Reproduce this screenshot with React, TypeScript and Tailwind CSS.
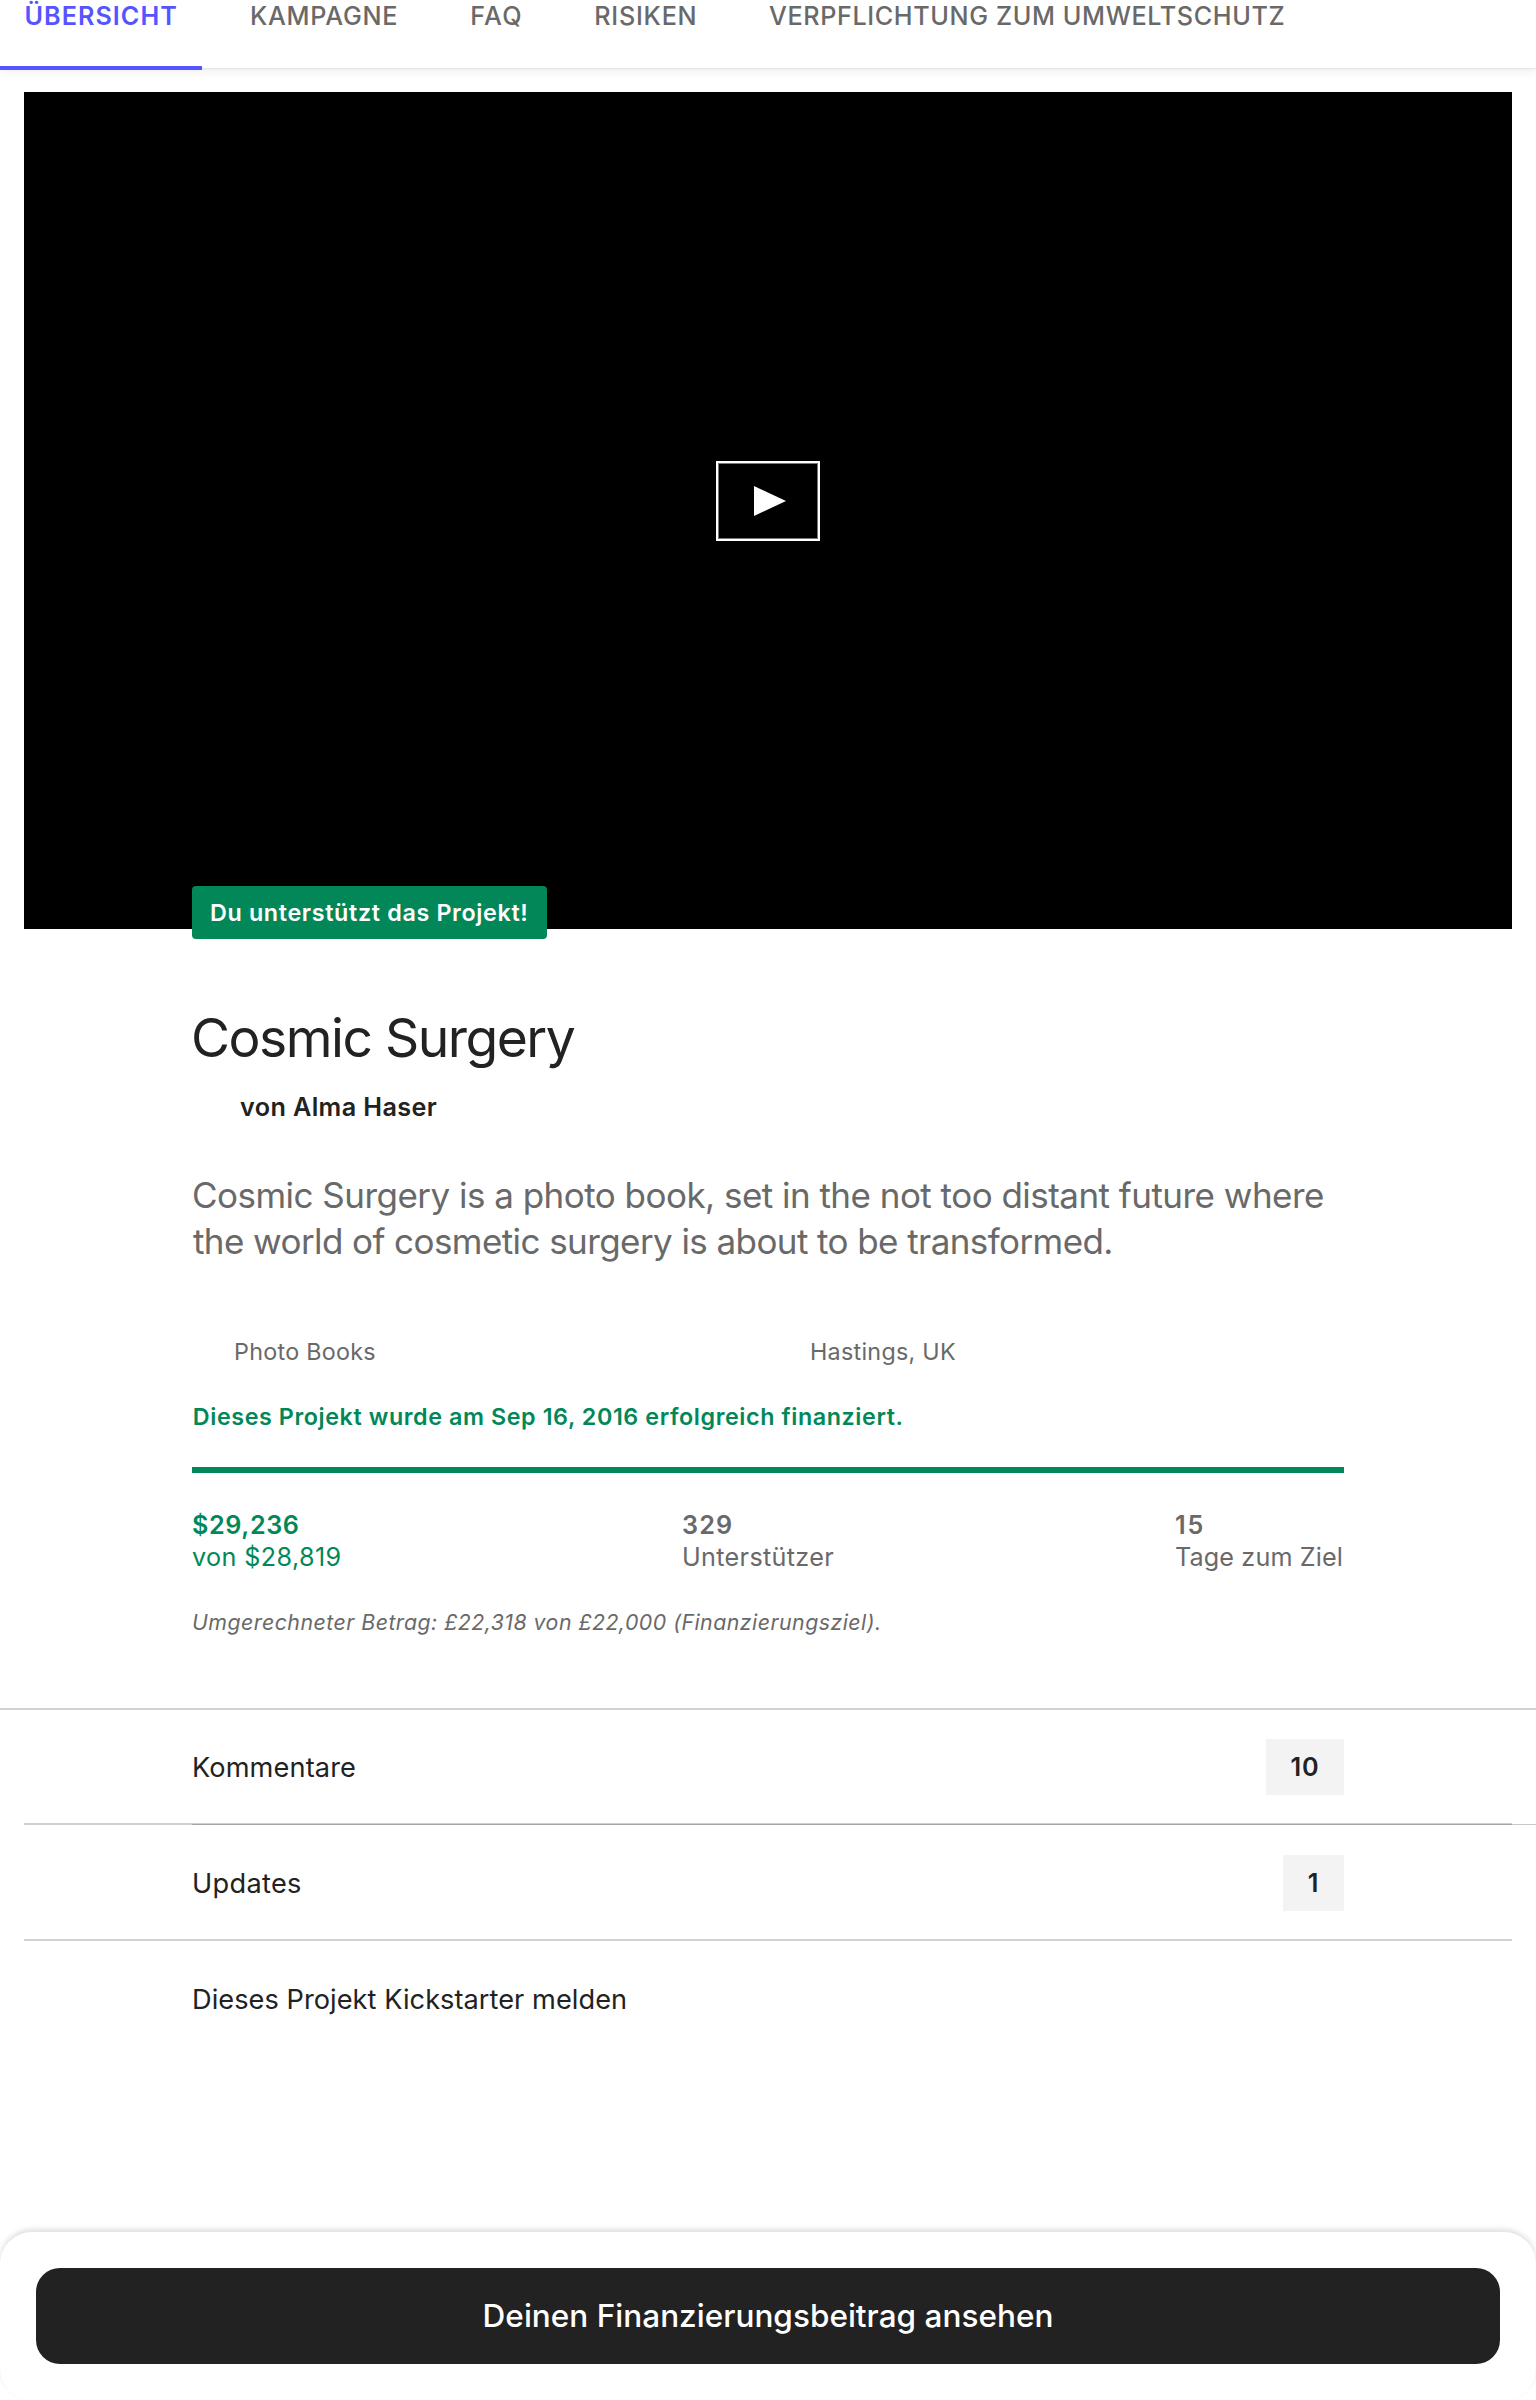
const tabs = [
  { label: 'KAMPAGNE', style: 'ml-[24px] w-[220.2px] tracking-[0.72px]' },
  { label: 'FAQ', style: 'w-[124.1px] tracking-[1.3px]' },
  { label: 'RISIKEN', style: 'w-[174.7px] tracking-[0.75px]' },
  { label: 'VERPFLICHTUNG ZUM UMWELTSCHUTZ', style: 'tracking-[0.61px]' },
]

function Tabs() {
  return (
    <nav className="relative z-10 flex h-[68px] bg-white text-[25.2px] leading-8 font-medium whitespace-nowrap text-[#696969] shadow-[0_4px_8px_rgba(0,0,0,0.06),0_1px_2px_rgba(0,0,0,0.08)]">
      <a className="h-[70px] w-[202px] border-b-4 border-[#5555ff] pl-[24.5px] font-semibold tracking-[1.03px] text-[#5555ff]">
        ÜBERSICHT
      </a>
      {tabs.map((t) => (
        <a key={t.label} className={`pl-6 ${t.style}`}>
          {t.label}
        </a>
      ))}
    </nav>
  )
}

function Video() {
  return (
    <div className="relative mx-6 mt-6 flex h-[837px] justify-center bg-black">
      <button className="mt-[369px] flex h-20 w-[104px] items-center justify-center border-2 border-white shadow-[inset_0_0_0_1px_#777]">
        <svg width="32" height="30" viewBox="0 0 32 30" className="ml-[3px]">
          <path d="M0 0L32 15L0 30Z" fill="#fff" />
        </svg>
      </button>
      <div className="absolute top-[794px] left-[168px] flex h-[53px] w-[355px] items-center rounded-[4px] bg-[#028858] pt-[2px] pl-[18px] text-[23.3px] font-semibold tracking-[0.66px] whitespace-nowrap text-white">
        Du unterstützt das Projekt!
      </div>
    </div>
  )
}

function Stats() {
  return (
    <div className="mt-9 flex text-[25.2px] leading-8 whitespace-nowrap text-[#696969]">
      <div className="w-[490px] text-[#028858]">
        <p className="font-semibold tracking-[0.6px]">$29,236</p>
        <p className="tracking-[0.38px]">von $28,819</p>
      </div>
      <div className="w-[493px]">
        <p className="font-semibold tracking-[1.1px]">329</p>
        <p className="tracking-[0.32px]">Unterstützer</p>
      </div>
      <div>
        <p className="font-semibold tracking-[1.8px]">15</p>
        <p className="tracking-[0.12px]">Tage zum Ziel</p>
      </div>
    </div>
  )
}

export default function App() {
  return (
    <div className="flex h-[2400px] w-full flex-col overflow-hidden bg-white font-['Inter',sans-serif] text-[#222222]">
      <Tabs />
      <Video />
      <main className="mx-48 pt-[79px]">
        <h1 className="-ml-px text-[53.4px] leading-[60px] tracking-[-1.5px]">Cosmic Surgery</h1>
        <p className="mt-[23px] pl-12 text-[25.2px] leading-8 font-semibold tracking-[0.38px]">von Alma Haser</p>
        <p className="mt-[49px] text-[35px] leading-[46px] tracking-[-0.525px] whitespace-nowrap text-[#696969]">
          Cosmic Surgery is a photo book, set in the not too distant future where
          <br />
          <span className="ml-px tracking-[-0.58px]">the world of cosmetic surgery is about to be transformed.</span>
        </p>
        <div className="mt-[72px] flex text-[23.3px] leading-8 text-[#696969]">
          <p className="w-[618px] pl-[42px] tracking-[0.28px]">Photo Books</p>
          <p className="tracking-[0.28px]">Hastings, UK</p>
        </div>
        <p className="mt-[33px] pl-[0.8px] text-[23.3px] leading-8 font-semibold tracking-[0.588px] text-[#028858]">
          Dieses Projekt wurde am Sep 16, 2016 erfolgreich finanziert.
        </p>
        <div className="mt-[34px] h-1.5 bg-[#028858]" />
        <Stats />
        <p className="mt-[33px] text-[21.3px] leading-8 tracking-[0.485px] whitespace-nowrap text-[#696969] italic">
          Umgerechneter Betrag: £22,318 von £22,000 (Finanzierungsziel).
        </p>
      </main>
      <section className="mt-[70px] border-t-2 border-[#d1d1d1] text-[27.2px] leading-8">
        <div className="mx-6 flex h-[113px] items-center justify-between px-[168px] pt-px">
          <span className="pt-[2px] tracking-[0.1px]">Kommentare</span>
          <span className="flex h-14 w-[78px] items-center justify-center bg-[#f3f3f3] text-[25.2px] font-semibold tracking-[0.8px]">
            10
          </span>
        </div>
        <div className="ml-6 h-px w-[1488px] bg-[#d1d1d1]" />
        <div className="ml-6 flex h-px">
          <div className="w-[168px] bg-[#d1d1d1]" />
          <div className="w-[1320px] bg-[#a3a3a3]" />
          <div className="w-6 bg-[#c8c8c8]" />
        </div>
        <div className="mx-6 flex h-[116px] items-center justify-between border-b-2 border-[#d1d1d1] px-[168px] pt-[2px]">
          <span className="pt-[2px] tracking-[0.3px]">Updates</span>
          <span className="flex h-14 w-[61px] items-center justify-center bg-[#f3f3f3] pr-px text-[25.2px] font-semibold">
            1
          </span>
        </div>
        <p className="mt-[43px] pl-48 tracking-[0.04px]">Dieses Projekt Kickstarter melden</p>
      </section>
      <footer className="mt-auto h-[168px] shrink-0 rounded-[32px] bg-white px-9 pt-9 shadow-[0_-3px_5px_rgba(0,0,0,0.12)]">
        <button className="flex h-24 w-full items-center justify-center rounded-3xl bg-[#222222] text-[31.5px] font-medium tracking-[0.02px] text-white">
          Deinen Finanzierungsbeitrag ansehen
        </button>
      </footer>
    </div>
  )
}
